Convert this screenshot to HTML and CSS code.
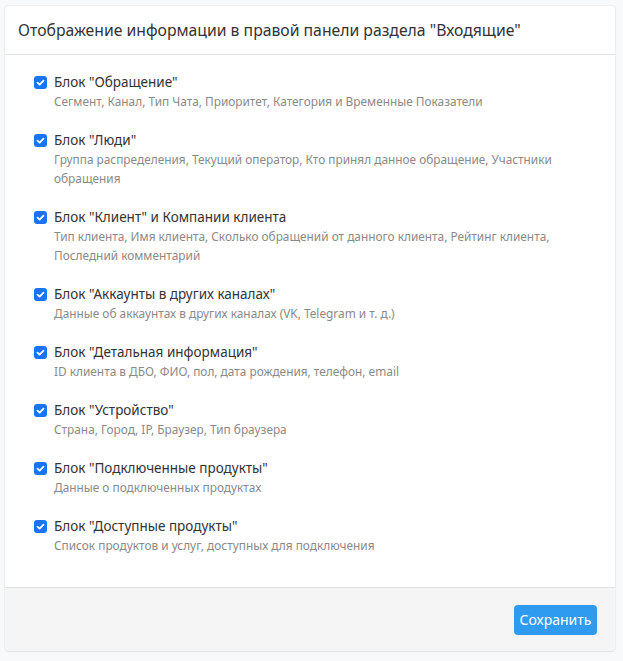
FILE: index.html
```html
<!DOCTYPE html>
<html lang="ru">
<head>
<meta charset="utf-8">
<link rel="stylesheet" href="styles.css">
</head>
<body>
<div class="card">
  <div class="card-header">Отображение информации в правой панели раздела "Входящие"</div>
  <div class="card-body">
    <label class="item"><span class="cb"><svg viewBox="0 0 13 13"><path d="M3.5 6.6 L5.6 8.6 L9.5 4.6" /></svg></span><span class="text"><span class="title">Блок "Обращение"</span><span class="desc">Сегмент, Канал, Тип Чата, Приоритет, Категория и Временные Показатели</span></span></label>
    <label class="item"><span class="cb"><svg viewBox="0 0 13 13"><path d="M3.5 6.6 L5.6 8.6 L9.5 4.6" /></svg></span><span class="text"><span class="title">Блок "Люди"</span><span class="desc">Группа распределения, Текущий оператор, Кто принял данное обращение, Участники обращения</span></span></label>
    <label class="item"><span class="cb"><svg viewBox="0 0 13 13"><path d="M3.5 6.6 L5.6 8.6 L9.5 4.6" /></svg></span><span class="text"><span class="title">Блок "Клиент" и Компании клиента</span><span class="desc">Тип клиента, Имя клиента, Сколько обращений от данного клиента, Рейтинг клиента, Последний комментарий</span></span></label>
    <label class="item"><span class="cb"><svg viewBox="0 0 13 13"><path d="M3.5 6.6 L5.6 8.6 L9.5 4.6" /></svg></span><span class="text"><span class="title">Блок "Аккаунты в других каналах"</span><span class="desc">Данные об аккаунтах в других каналах (VK, Telegram и т. д.)</span></span></label>
    <label class="item"><span class="cb"><svg viewBox="0 0 13 13"><path d="M3.5 6.6 L5.6 8.6 L9.5 4.6" /></svg></span><span class="text"><span class="title">Блок "Детальная информация"</span><span class="desc">ID клиента в ДБО, ФИО, пол, дата рождения, телефон, email</span></span></label>
    <label class="item"><span class="cb"><svg viewBox="0 0 13 13"><path d="M3.5 6.6 L5.6 8.6 L9.5 4.6" /></svg></span><span class="text"><span class="title">Блок "Устройство"</span><span class="desc">Страна, Город, IP, Браузер, Тип браузера</span></span></label>
    <label class="item"><span class="cb"><svg viewBox="0 0 13 13"><path d="M3.5 6.6 L5.6 8.6 L9.5 4.6" /></svg></span><span class="text"><span class="title">Блок "Подключенные продукты"</span><span class="desc">Данные о подключенных продуктах</span></span></label>
    <label class="item"><span class="cb"><svg viewBox="0 0 13 13"><path d="M3.5 6.6 L5.6 8.6 L9.5 4.6" /></svg></span><span class="text"><span class="title">Блок "Доступные продукты"</span><span class="desc">Список продуктов и услуг, доступных для подключения</span></span></label>
  </div>
  <div class="card-footer"><button class="btn">Сохранить</button></div>
</div>
</body>
</html>
```
FILE: styles.css
```css
html, body {
  margin: 0;
  padding: 0;
  background: #f8f9fb;
}
body {
  padding: 6px 8px 9px 5px;
  font-family: "Noto Sans", "Open Sans", sans-serif;
  color: #333;
}
.card {
  background: #fff;
  border-radius: 4px;
  box-shadow: 0 0 2px rgba(0,0,0,0.12), 0 1px 2px rgba(0,0,0,0.06);
  overflow: hidden;
}
.card-header {
  height: 49px;
  box-sizing: border-box;
  padding: 0 13px;
  display: flex;
  align-items: center;
  font-size: 15.75px;
  color: #333;
  border-bottom: 1px solid #e4e4e4;
}
.card-body {
  padding: 17px 29px 32px;
  display: flex;
  flex-direction: column;
  gap: 19px;
}
.item {
  display: flex;
  align-items: flex-start;
  gap: 7px;
}
.cb {
  flex: none;
  width: 13px;
  height: 13px;
  margin-top: 4px;
  background: #1a73f2;
  border-radius: 3px;
  display: flex;
}
.cb svg {
  width: 13px;
  height: 13px;
  fill: none;
  stroke: #fff;
  stroke-width: 1.8;
  stroke-linecap: round;
  stroke-linejoin: round;
}
.text {
  display: flex;
  flex-direction: column;
}
.title {
  font-size: 13.5px;
  line-height: 20px;
  color: #333;
}
.desc {
  font-size: 11.85px;
  line-height: 19px;
  color: #8a8a8a;
  padding-right: 20px;
}
.card-footer {
  height: 64px;
  box-sizing: border-box;
  background: #f5f5f5;
  border-top: 1px solid #e2e2e2;
  display: flex;
  justify-content: flex-end;
  align-items: center;
  padding: 0 18px 0 0;
}
.btn {
  font-family: inherit;
  font-size: 14px;
  color: #fff;
  background: #2f9bf0;
  border: none;
  border-radius: 4px;
  height: 30px;
  width: 83px;
  padding: 0;
}
```
